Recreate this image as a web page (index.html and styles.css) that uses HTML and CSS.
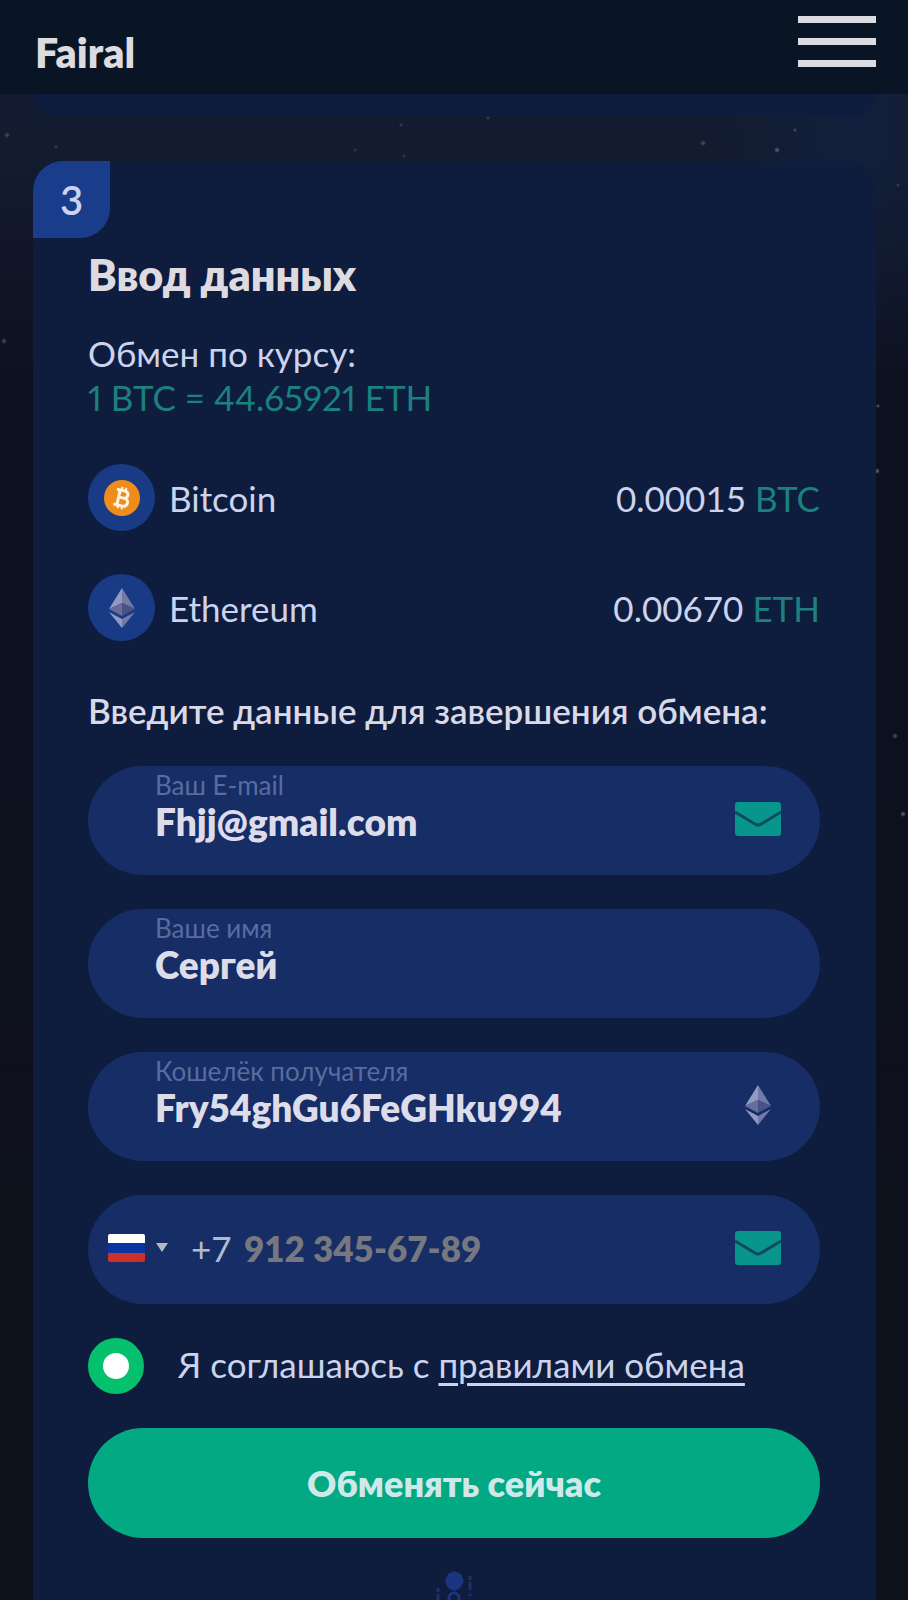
FILE: index.html
```html
<!DOCTYPE html>
<html lang="ru">
<head>
    <meta charset="UTF-8">
    <meta name="viewport" content="width=device-width, initial-scale=1.0">
    <title>Fairal</title>
    <link rel="stylesheet" href="styles.css">
</head>
<body>
    <svg class="defs" aria-hidden="true">
        <symbol id="icon-eth" viewBox="0 0 26 40">
            <path d="M13 0 0 21 13 15z" fill="#929ac4"/>
            <path d="M13 0 26 21 13 15z" fill="#737aa8"/>
            <path d="M0 21 13 15V28z" fill="#666d9c"/>
            <path d="M26 21 13 15V28z" fill="#4a5288"/>
            <path d="M0 24 13 31V40z" fill="#929ac4"/>
            <path d="M26 24 13 31V40z" fill="#737aa8"/>
        </symbol>
        <symbol id="icon-mail" viewBox="0 0 46 34">
            <rect width="46" height="34" rx="3" fill="#08968c"/>
            <path d="M0 10 20 22Q23 24 26 22L46 10" fill="none" stroke="#0d4a66" stroke-width="3"/>
        </symbol>
    </svg>

    <header>
        <a href="#" class="logo">Fairal</a>
        <button type="button" class="menu-button" aria-label="Меню">
            <span></span>
            <span></span>
            <span></span>
        </button>
    </header>

    <main>
        <section class="card card-prev"></section>

        <section class="card card-data">
            <div class="step">3</div>
            <div class="card-body">
                <h2>Ввод данных</h2>
                <p class="rate">Обмен по курсу:<br><span class="green">1 BTC = 44.65921 ETH</span></p>

                <div class="coin">
                    <div class="coin-icon">
                        <svg width="36" height="36" viewBox="0 0 36 36" aria-hidden="true">
                            <circle cx="18" cy="18" r="18" fill="#f08c1c"/>
                            <g transform="rotate(13 18 18)" fill="none" stroke="#fff4e0" stroke-width="3">
                                <path d="M11 10.500H19.500a3.500 3.500 0 0 1 0 7.300H14M14 17.800H20.500a4 4 0 0 1 0 8H11M14.500 10.500V25.800"/>
                                <path d="M16 7v4M20 7v4M16 25v4M20 25v4" stroke-width="2"/>
                            </g>
                        </svg>
                    </div>
                    <span class="coin-name">Bitcoin</span>
                    <span class="coin-sum">0.00015 <span class="green">BTC</span></span>
                </div>
                <div class="coin">
                    <div class="coin-icon">
                        <svg width="26" height="40" aria-hidden="true"><use href="#icon-eth"/></svg>
                    </div>
                    <span class="coin-name">Ethereum</span>
                    <span class="coin-sum">0.00670 <span class="green">ETH</span></span>
                </div>

                <form action="#" method="post">
                    <h3>Введите данные для завершения обмена:</h3>

                    <div class="field">
                        <div class="field-text">
                            <label for="email">Ваш E-mail</label>
                            <input type="text" id="email" name="email" value="Fhjj@gmail.com">
                        </div>
                        <div class="field-icon"><svg width="46" height="34" aria-hidden="true"><use href="#icon-mail"/></svg></div>
                    </div>
                    <div class="field">
                        <div class="field-text">
                            <label for="name">Ваше имя</label>
                            <input type="text" id="name" name="name" value="Сергей">
                        </div>
                    </div>
                    <div class="field">
                        <div class="field-text">
                            <label for="wallet">Кошелёк получателя</label>
                            <input type="text" id="wallet" name="wallet" value="Fry54ghGu6FeGHku994">
                        </div>
                        <div class="field-icon"><svg width="26" height="40" aria-hidden="true"><use href="#icon-eth"/></svg></div>
                    </div>
                    <div class="field field-phone">
                        <select name="country" aria-label="Код страны">
                            <option>+7</option>
                        </select>
                        <input type="tel" name="phone" placeholder="912 345-67-89" aria-label="Телефон">
                        <div class="field-icon"><svg width="46" height="34" aria-hidden="true"><use href="#icon-mail"/></svg></div>
                    </div>

                    <div class="agree">
                        <input type="radio" id="agree" name="agree" checked>
                        <label for="agree">Я соглашаюсь с <a href="#">правилами обмена</a></label>
                    </div>

                    <button type="submit" class="submit-button">Обменять сейчас</button>
                </form>

                <svg class="badge" width="40" height="29" viewBox="0 0 40 29" aria-hidden="true">
                    <path d="M20 0 27 3 30 10 26 17 20 20 14 17 11 10 14 3z" fill="#1b3580"/>
                    <circle cx="20" cy="27" r="5" fill="none" stroke="#1b3580" stroke-width="3"/>
                    <path d="M36 5v4M36 11v8M36 23v2M4 17v4M4 23v6" stroke="#1b3068" stroke-width="3"/>
                </svg>
            </div>
        </section>
    </main>
</body>
</html>
```

FILE: styles.css
```css
* {
    box-sizing: border-box;
}

body {
    margin: 0;
    min-height: 100vh;
    display: flex;
    flex-direction: column;
    font-family: Lato, "Noto Sans", sans-serif;
    font-size: 35px;
    font-weight: 400;
    line-height: 44px;
    color: #ccd3ee;
    background-color: #0d121e;
    background-image:
        radial-gradient(circle, #3a4254 1px, transparent 3px),
        radial-gradient(circle, #2c3448 1px, transparent 2px),
        radial-gradient(circle, #2c3448 1px, transparent 2px),
        radial-gradient(circle, #2c3448 1px, transparent 2px),
        radial-gradient(circle, #2c3a4c 1px, transparent 2px),
        radial-gradient(circle, #2c3a4c 1px, transparent 2px),
        radial-gradient(circle, #3a4660 1px, transparent 3px),
        radial-gradient(circle, #4a5468 1px, transparent 3px),
        radial-gradient(circle, #3a4660 1px, transparent 2px),
        radial-gradient(circle, #2c3a4c 1px, transparent 2px),
        radial-gradient(circle, #3a4254 1px, transparent 3px),
        radial-gradient(circle, #3a4a54 1px, transparent 2px),
        radial-gradient(circle, #4a5468 1px, transparent 3px),
        radial-gradient(circle, #3a4254 1px, transparent 3px),
        radial-gradient(circle, #4a5468 1px, transparent 3px),
        radial-gradient(ellipse at 94% 122px, rgba(18, 34, 66, 0.7), transparent 150px),
        linear-gradient(#121b30 94px, #131b2e 160px, #0d101e 400px, #0d101e 800px, #0d121a);
    background-size: 8px 8px, 8px 8px, 8px 8px, 8px 8px, 8px 8px, 8px 8px, 8px 8px, 8px 8px, 8px 8px, 8px 8px, 8px 8px, 8px 8px, 8px 8px, 8px 8px, 8px 8px, auto, auto;
    background-position:
        3px 131px, 52px 143px, 351px 146px, 400px 152px, 397px 121px,
        484px 114px, 699px 139px, 773px 146px, 791px 126px, right 6px top 181px,
        0 337px, right 26px top 402px, right 27px top 467px, right 9px top 732px, right 1px top 810px,
        0 0, 0 0;
    background-repeat: no-repeat;
}

.defs {
    position: absolute;
    width: 0;
    height: 0;
}

header {
    display: flex;
    justify-content: space-between;
    align-items: flex-start;
    height: 94px;
    padding: 16px 32px 0 35px;
    background-color: #091525;
}

.logo {
    margin-top: 15px;
    color: #dedbe0;
    font-size: 41px;
    font-weight: 800;
    text-decoration: none;
}

.menu-button {
    display: flex;
    flex-direction: column;
    gap: 15px;
    width: 78px;
    padding: 0;
    border: none;
    background: none;
    cursor: pointer;
}

.menu-button span {
    height: 7px;
    width: 100%;
    background-color: #dcdbe2;
}

main {
    flex: 1;
    display: flex;
    flex-direction: column;
    padding: 0 32px 0 33px;
}

.card {
    background-color: #0e1d3d;
}

.card-prev {
    height: 22px;
    margin-bottom: 45px;
    border-radius: 0 0 30px 30px;
}

.card-data {
    flex: 1;
    border-radius: 30px 30px 0 0;
}

.step {
    display: flex;
    align-items: center;
    justify-content: center;
    width: 77px;
    height: 77px;
    border-radius: 30px 0;
    background-color: #193d8a;
    font-size: 40px;
    font-weight: 600;
}

.card-body {
    padding: 15px 56px 0 55px;
}

h2 {
    margin: 0 0 34px;
    color: #dedbe0;
    font-size: 43px;
    font-weight: 800;
}

.rate {
    margin: 0 0 45px;
    font-variant-numeric: proportional-nums;
}

.green {
    color: #1b807e;
}

.coin {
    display: flex;
    align-items: center;
    gap: 14px;
    margin-bottom: 43px;
}

.coin-icon {
    display: flex;
    align-items: center;
    justify-content: center;
    width: 67px;
    height: 67px;
    border-radius: 50%;
    background-color: #193b85;
}

.coin-sum {
    margin-left: auto;
}

form {
    display: flex;
    flex-direction: column;
    gap: 34px;
}

h3 {
    margin: 4px 0 0;
    color: #d9d9e8;
    font-size: 35px;
    font-weight: 600;
}

.field {
    display: flex;
    align-items: center;
    height: 109px;
    padding: 0 28px 4px 67px;
    border-radius: 55px;
    background-color: #162d65;
}

.field-text {
    flex: 1;
    height: 100%;
    padding-top: 6px;
}

.field label {
    display: block;
    color: #596c9f;
    font-size: 26px;
    line-height: 26px;
}

.field input {
    display: block;
    width: 100%;
    height: 46px;
    padding: 0;
    border: none;
    outline: none;
    background: none;
    color: #dddcea;
    font-family: inherit;
    font-size: 37px;
    font-weight: 800;
}

.field-icon {
    display: flex;
    justify-content: center;
    width: 68px;
}

.field-phone {
    gap: 11px;
    padding-left: 20px;
}

.field-phone input {
    flex: 1;
    font-size: 35px;
}

.field-phone input::placeholder {
    color: #757880;
    opacity: 1;
}

.field-phone select {
    width: 125px;
    height: 44px;
    padding: 0 0 0 83px;
    border: none;
    outline: none;
    appearance: none;
    color: #aebbd0;
    font: inherit;
    background: url("data:image/svg+xml,%3Csvg xmlns='http://www.w3.org/2000/svg' width='60' height='28'%3E%3CclipPath id='a'%3E%3Crect width='37' height='28' rx='2'/%3E%3C/clipPath%3E%3Cg clip-path='url(%23a)'%3E%3Cpath fill='%23fff' d='M0 0h37v10H0z'/%3E%3Cpath fill='%230634a0' d='M0 9h37v10H0z'/%3E%3Cpath fill='%23cc3029' d='M0 19h37v9H0z'/%3E%3C/g%3E%3Cpath fill='%23aebbc4' d='M48 9h12l-6 9z'/%3E%3C/svg%3E") no-repeat left center;
}

.agree {
    display: flex;
    align-items: center;
    gap: 34px;
}

.agree input {
    appearance: none;
    width: 56px;
    height: 56px;
    margin: 0;
    border: 15px solid #05c06c;
    border-radius: 50%;
    background-color: #fff;
}

.agree label {
    padding-bottom: 5px;
}

.agree a {
    color: inherit;
    text-decoration-thickness: 3px;
    text-underline-offset: 5px;
}

.submit-button {
    height: 110px;
    border: none;
    border-radius: 55px;
    background-color: #02a983;
    color: #cfe8ea;
    font-family: inherit;
    font-size: 36px;
    font-weight: 800;
    cursor: pointer;
}

.badge {
    display: block;
    margin: 33px auto 0;
}
```
